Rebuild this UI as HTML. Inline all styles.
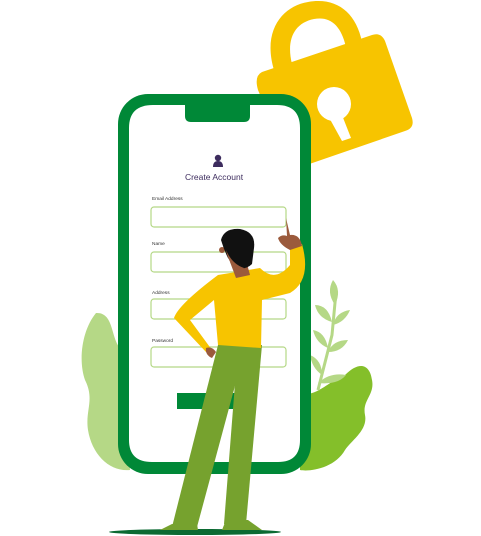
<!DOCTYPE html>
<html><head><meta charset="utf-8"><style>
html,body{margin:0;padding:0;background:#fff;width:481px;height:536px;overflow:hidden}
svg{display:block}
text{font-family:"Liberation Sans",sans-serif}
</style></head><body>
<svg width="481" height="536" viewBox="0 0 481 536" xmlns="http://www.w3.org/2000/svg">
<!-- lock -->
<g fill="#f7c400">
<path d="M274 70 C262 30 283 6 308 2 C336 -3 356 12 362 42 L346 47 C341 25 330 16 314 19 C294 23 286 40 292 64 Z"/>
<path d="M262 72 L372 35 Q381 32 385 41 L412 118 Q415 128 405 131 L292 170 L258 90 Q254 76 262 72 Z"/>
</g>
<circle cx="334" cy="104" r="17" fill="#fff"/>
<path d="M326 112 L340 110 L351 138 L342 141 Z" fill="#fff"/>
<!-- plants -->
<path d="M96 313 C115 312 110 340 122 350 L130 470 C110 472 92 455 88 430 C85 410 95 400 85 380 C78 360 82 330 96 313 Z" fill="#b5d886"/>
<path d="M300 395 C320 395 330 380 345 375 C360 360 370 365 372 380 C375 395 362 400 365 415 C368 430 352 440 345 450 C335 468 310 472 300 470 Z" fill="#84bf2a"/>
<g fill="#b5d886">
<path d="M333 280 Q342 290 335 305 Q326 292 333 280Z"/>
<path d="M315 305 Q328 305 332 322 Q318 318 315 305Z"/>
<path d="M350 310 Q345 322 333 325 Q336 312 350 310Z"/>
<path d="M313 330 Q325 332 328 348 Q316 343 313 330Z"/>
<path d="M348 340 Q342 352 328 352 Q333 340 348 340Z"/>
<path d="M310 355 Q322 360 322 375 Q312 368 310 355Z"/>
<path d="M346 375 Q338 385 318 383 Q330 372 346 375Z"/>
<path d="M336 292 L332 335 L318 390" stroke="#b5d886" stroke-width="3" fill="none"/>
</g>
<!-- phone -->
<rect x="118" y="94" width="193" height="380" rx="30" fill="#008837"/>
<path d="M153 105 L185 105 L185 116 Q185 122 191 122 L244 122 Q250 122 250 116 L250 105 L277 105 Q300 105 300 128 L300 440 Q300 462 278 462 L152 462 Q129 462 129 440 L129 128 Q129 105 153 105 Z" fill="#fff"/>
<circle cx="218" cy="158" r="3.2" fill="#3d2c5e"/>
<path d="M213 167 Q213 161 218 161 Q223 161 223 167 Z" fill="#3d2c5e"/>
<text x="214" y="180" font-size="8.5" fill="#3d2c5e" text-anchor="middle">Create Account</text>
<g font-size="4.8" fill="#333">
<text x="152" y="200">Email Address</text>
<text x="152" y="245">Name</text>
<text x="152" y="294">Address</text>
<text x="152" y="342">Password</text>
</g>
<g fill="none" stroke="#b5d886" stroke-width="1.2">
<rect x="151" y="207" width="135" height="20" rx="3"/>
<rect x="151" y="252" width="135" height="20" rx="3"/>
<rect x="151" y="299" width="135" height="20" rx="3"/>
<rect x="151" y="347" width="135" height="20" rx="3"/>
</g>
<rect x="177" y="393" width="61" height="16" fill="#008837"/>
<!-- person -->
<ellipse cx="195" cy="532" rx="86" ry="3" fill="#0b6a32"/>
<path d="M218 345 L246 345 L197 527 L172 527 Z" fill="#76a22e"/>
<path d="M160 530 L172 524 L197 524 L198 530 Z" fill="#76a22e"/>
<path d="M238 345 L262 345 L246 524 L224 524 Z" fill="#76a22e"/>
<path d="M222 530 L226 520 L248 520 L262 530 Z" fill="#76a22e"/>
<path d="M218 275 L260 268 Q275 283 290 265 L290 246 L302 244 Q312 280 290 293 L262 300 L261 348 L218 345 L214 300 L190 320 L212 350 L206 352 L174 318 Q178 305 218 275 Z" fill="#f7c400"/>
<path d="M206 348 Q212 346 216 352 L212 358 Q205 355 206 348Z" fill="#9b5a3c"/>
<path d="M286 218 L290 235 Q300 234 302 246 L290 250 Q280 245 278 238 Q282 234 287 236 Z" fill="#9b5a3c"/>
<path d="M230 262 L246 260 L250 275 L236 278 Z" fill="#9b5a3c"/>
<circle cx="222" cy="250" r="3" fill="#9b5a3c"/>
<path d="M221 240 Q224 228 240 229 Q256 232 254 248 L252 264 Q246 270 236 268 L228 258 Q224 250 221 240 Z" fill="#111"/>
<path d="M226 250 Q232 264 244 268 L240 272 Q230 268 226 250Z" fill="#9b5a3c"/>
</svg>
</body></html>
